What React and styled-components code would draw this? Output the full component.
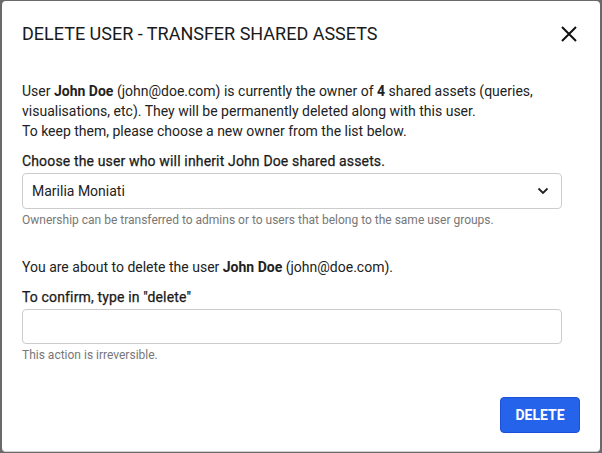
import styled, { createGlobalStyle } from "styled-components"

const GlobalStyle = createGlobalStyle`
    html, body {
        margin: 0;
        padding: 0;
        background: #6a6a6a;
        font-family: Roboto, "Liberation Sans", sans-serif;
    }
`

export default function App() {
    return (
        <Backdrop>
            <GlobalStyle />
            <Dialog>
                <Header>
                    <Title>DELETE USER - TRANSFER SHARED ASSETS</Title>
                    <CloseButton aria-label="Close">
                        <svg width="18" height="18" viewBox="0 0 18 18">
                            <path d="M2 2 L16 16 M16 2 L2 16" stroke="#111" strokeWidth="2" fill="none" />
                        </svg>
                    </CloseButton>
                </Header>
                <Body>
                    <Text>
                        User <b>John Doe</b> (john@doe.com) is currently the owner of <b>4</b> shared assets (queries,
                        visualisations, etc). They will be permanently deleted along with this user.
                        <br />
                        To keep them, please choose a new owner from the list below.
                    </Text>
                    <Label>Choose the user who will inherit John Doe shared assets.</Label>
                    <Select>
                        <span>Marilia Moniati</span>
                        <svg width="12" height="8" viewBox="0 0 12 8">
                            <path d="M1.5 1.5 L6 6 L10.5 1.5" stroke="#222" strokeWidth="1.8" fill="none" />
                        </svg>
                    </Select>
                    <Help>Ownership can be transferred to admins or to users that belong to the same user groups.</Help>
                    <Text $top={29}>
                        You are about to delete the user <b>John Doe</b> (john@doe.com).
                    </Text>
                    <Label>To confirm, type in "delete"</Label>
                    <Input type="text" />
                    <Help>This action is irreversible.</Help>
                </Body>
                <Footer>
                    <DeleteButton>DELETE</DeleteButton>
                </Footer>
            </Dialog>
        </Backdrop>
    )
}

const Backdrop = styled.div`
    width: 602px;
    height: 453px;
    padding: 1px 2px 1px 2px;
    box-sizing: border-box;
`

const Dialog = styled.div`
    width: 598px;
    height: 451px;
    background: #fff;
    border-radius: 4px;
    box-sizing: border-box;
    border-bottom: 1px solid #cfcfcf;
    display: flex;
    flex-direction: column;
`

const Header = styled.div`
    display: flex;
    justify-content: space-between;
    align-items: center;
    padding: 21px 20px 0 20px;
`

const Title = styled.h2`
    margin: 0;
    font-size: 18px;
    line-height: 24px;
    font-weight: 400;
    color: #1a1a1a;
`

const CloseButton = styled.button`
    border: 0;
    background: none;
    padding: 0;
    width: 18px;
    height: 18px;
    display: flex;
    cursor: pointer;
    margin-right: 2px;
`

const Body = styled.div`
    display: flex;
    flex-direction: column;
    padding: 0 38px 0 20px;
    margin-top: 35px;
`

const Text = styled.p`
    margin: ${p => p.$top || 0}px 0 0 0;
    font-size: 14px;
    line-height: 20px;
    color: #222;
    b {
        font-weight: 700;
    }
`

const Label = styled.div`
    margin-top: 10px;
    font-size: 14px;
    line-height: 20px;
    font-weight: 400;
    letter-spacing: 0.15px;
    -webkit-text-stroke: 0.25px #1a1a1a;
    color: #1a1a1a;
`

const Select = styled.div`
    margin-top: 2px;
    height: 36px;
    box-sizing: border-box;
    border: 1px solid #cccccc;
    border-radius: 4px;
    display: flex;
    align-items: center;
    justify-content: space-between;
    padding: 0 12px 0 9px;
    font-size: 14px;
    color: #222;
`

const Input = styled.input`
    margin-top: 2px;
    height: 35px;
    box-sizing: border-box;
    border: 1px solid #cccccc;
    border-radius: 4px;
    outline: none;
`

const Help = styled.div`
    margin-top: 3px;
    font-size: 12px;
    line-height: 16px;
    color: #777;
`

const Footer = styled.div`
    margin-top: auto;
    display: flex;
    justify-content: flex-end;
    padding: 0 20px 18px 0;
`

const DeleteButton = styled.button`
    width: 80px;
    height: 36px;
    background: #2563eb;
    color: #fff;
    border: 1px solid #1d4fd8;
    border-radius: 4px;
    font-family: Roboto, "Liberation Sans", sans-serif;
    font-weight: 700;
    font-size: 14px;
    cursor: pointer;
`
